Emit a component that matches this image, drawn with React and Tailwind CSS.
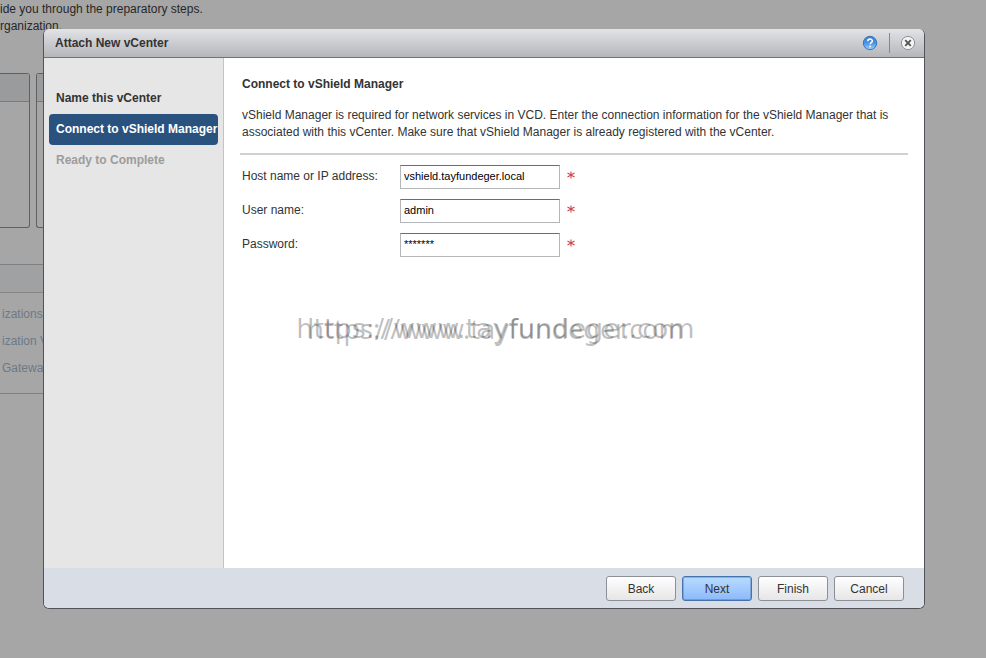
import { useState } from "react";

const STEPS = [
  { label: "Name this vCenter", state: "done" },
  { label: "Connect to vShield Manager", state: "active" },
  { label: "Ready to Complete", state: "pending" },
];

const STEP_STYLES = {
  done: "text-[#333]",
  active: "bg-[#2a527f] text-white",
  pending: "text-[#9c9c9c]",
};

const FIELDS = [
  { id: "host", label: "Host name or IP address:", type: "text", value: "vshield.tayfundeger.local" },
  { id: "user", label: "User name:", type: "text", value: "admin" },
  { id: "password", label: "Password:", type: "text", value: "*******" },
];

const BUTTONS = ["Back", "Next", "Finish", "Cancel"];

function HelpIcon() {
  return (
    <svg viewBox="0 0 16 16" className="h-4 w-4" aria-hidden="true">
      <defs>
        <linearGradient id="help" x1="0" y1="0" x2="0" y2="1">
          <stop offset="0" stopColor="#3a7ed2" />
          <stop offset="0.5" stopColor="#4a94e6" />
          <stop offset="1" stopColor="#9ad2fc" />
        </linearGradient>
      </defs>
      <circle cx="8" cy="8" r="6.7" fill="url(#help)" stroke="#3a74bc" />
      <path d="M5.8 6.3c0-3 4.5-2.9 4.5-.3 0 1.6-2 1.6-2.1 3.2" fill="none" stroke="#fff" strokeWidth="1.5" />
      <circle cx="8.1" cy="11.4" r="0.9" fill="#fff" />
    </svg>
  );
}

function CloseIcon() {
  return (
    <svg viewBox="0 0 16 16" className="h-4 w-4" aria-hidden="true">
      <circle cx="8" cy="8" r="6.6" fill="#f4f4f4" stroke="#909090" />
      <path d="M5.2 5.2l5.6 5.6M10.8 5.2l-5.6 5.6" stroke="#555" strokeWidth="1.9" />
    </svg>
  );
}

function RequiredMark() {
  return (
    <svg viewBox="0 0 8 8" className="mb-1 ml-[7px] h-2 w-2" role="img" aria-label="required">
      <path d="M4 .5v7M.5 2l7 4M7.5 2l-7 4" stroke="#d2474a" strokeWidth="1.1" />
    </svg>
  );
}

function Backdrop() {
  return (
    <div className="pt-px text-xs text-[#262626]">
      <p className="leading-[17px]">
        ide you through the preparatory steps.
        <br />
        rganization.
      </p>
      <div className="mt-[38px] flex h-[155px] w-20 gap-[6px]">
        <div className="w-[30px] rounded-r-[3px] border border-l-0 border-[#606060]">
          <div className="h-7 border-b border-[#7c7c7c] bg-[#9a9b9c]" />
        </div>
        <div className="flex-1 rounded-l-[3px] border border-r-0 border-[#606060]">
          <div className="h-7 border-b border-[#7c7c7c] bg-[#9a9b9c]" />
        </div>
      </div>
      <div className="mt-9 w-20 border-y border-[#808080]">
        <div className="h-7 border-b border-[#868686] bg-[#9fa1a3]" />
        <ul className="flex h-[100px] flex-col pt-2 pl-[2px] leading-[27px] whitespace-nowrap text-[#6c7a88]">
          <li><a href="#organizations">izations</a></li>
          <li><a href="#vdcs">ization VDCs</a></li>
          <li><a href="#gateways">Gateways</a></li>
        </ul>
      </div>
    </div>
  );
}

function Watermark() {
  return (
    <div className="pointer-events-none absolute inset-x-0 top-[254px] grid justify-items-center pr-[157px] leading-[34px] whitespace-nowrap text-black/25">
      <span className="col-start-1 row-start-1 font-['DejaVu_Sans',sans-serif] text-[27px]">https://www.tayfundeger.com</span>
      <span className="col-start-1 row-start-1 font-['Noto_Sans',sans-serif] text-[27px]">https://www.tayfundeger.com</span>
    </div>
  );
}

export default function App() {
  const [values, setValues] = useState(() => Object.fromEntries(FIELDS.map((f) => [f.id, f.value])));

  return (
    <div className="relative min-h-screen overflow-hidden bg-[#a6a6a6] font-['Liberation_Sans',Arial,sans-serif]">
      <Backdrop />

      <div className="absolute inset-0 flex pt-[29px] pr-[61px] pb-[49px] pl-[43px]">
        <section
          role="dialog"
          aria-labelledby="dialog-title"
          className="flex flex-1 flex-col overflow-hidden rounded-md border border-t-0 border-[#505459] bg-white text-xs text-[#333]"
        >
          <header className="flex h-[29px] items-center border-b border-[#707274] bg-linear-to-b from-[#e2e3e6] to-[#b5b6ba] pr-2 pl-[11px]">
            <h1 id="dialog-title" className="flex-1 font-bold">Attach New vCenter</h1>
            <button type="button" aria-label="Help"><HelpIcon /></button>
            <div className="mr-[10px] ml-[11px] h-5 w-px bg-[#85878a]" />
            <button type="button" aria-label="Close"><CloseIcon /></button>
          </header>

          <div className="flex flex-1">
            <nav className="w-[180px] shrink-0 border-r border-[#c4c4c4] bg-[#e6e6e6] px-[5px] pt-[25px]">
              <ol>
                {STEPS.map(({ label, state }) => (
                  <li
                    key={label}
                    aria-current={state === "active" ? "step" : undefined}
                    className={`rounded px-[7px] leading-[31px] font-bold whitespace-nowrap ${STEP_STYLES[state]}`}
                  >
                    {label}
                  </li>
                ))}
              </ol>
            </nav>

            <main className="relative flex-1 px-4 pt-[18px]">
              <h2 className="px-[2px] leading-4 font-bold">Connect to vShield Manager</h2>
              <p className="mt-[15px] px-[2px] leading-[17px]">
                vShield Manager is required for network services in VCD. Enter the connection information for the vShield Manager that is associated with this vCenter. Make sure that vShield Manager is already registered with the vCenter.
              </p>
              <hr className="mt-3 mb-[10px] border-t-2 border-[#d0d0d0]" />
              <form className="flex flex-col gap-[10px]">
                {FIELDS.map(({ id, label, type }) => (
                  <div key={id} className="flex h-6 items-center">
                    <label htmlFor={id} className="w-[160px] pb-[2px] pl-[2px]">{label}</label>
                    <input
                      id={id}
                      type={type}
                      value={values[id]}
                      onChange={(e) => setValues({ ...values, [id]: e.target.value })}
                      className="h-6 w-[160px] border border-[#b4b6b8] border-t-[#6a6c6e] bg-white px-[3px] pb-[2px] text-[11px] text-black"
                    />
                    <RequiredMark />
                  </div>
                ))}
              </form>
              <Watermark />
            </main>
          </div>

          <footer className="flex h-10 items-center justify-end gap-[6px] bg-[#d9dee6] pr-5">
            {BUTTONS.map((label) => (
              <button
                key={label}
                type="button"
                className={`h-[25px] w-[70px] rounded-[3px] border bg-linear-to-b pt-px ${
                  label === "Next"
                    ? "border-[#4474ab] from-[#b8dcff] to-[#8db9fb] ring-1 ring-[#4474ab]/40 ring-inset"
                    : "border-[#8c8f94] from-white to-[#e6e6e6]"
                }`}
              >
                {label}
              </button>
            ))}
          </footer>
        </section>
      </div>
    </div>
  );
}
